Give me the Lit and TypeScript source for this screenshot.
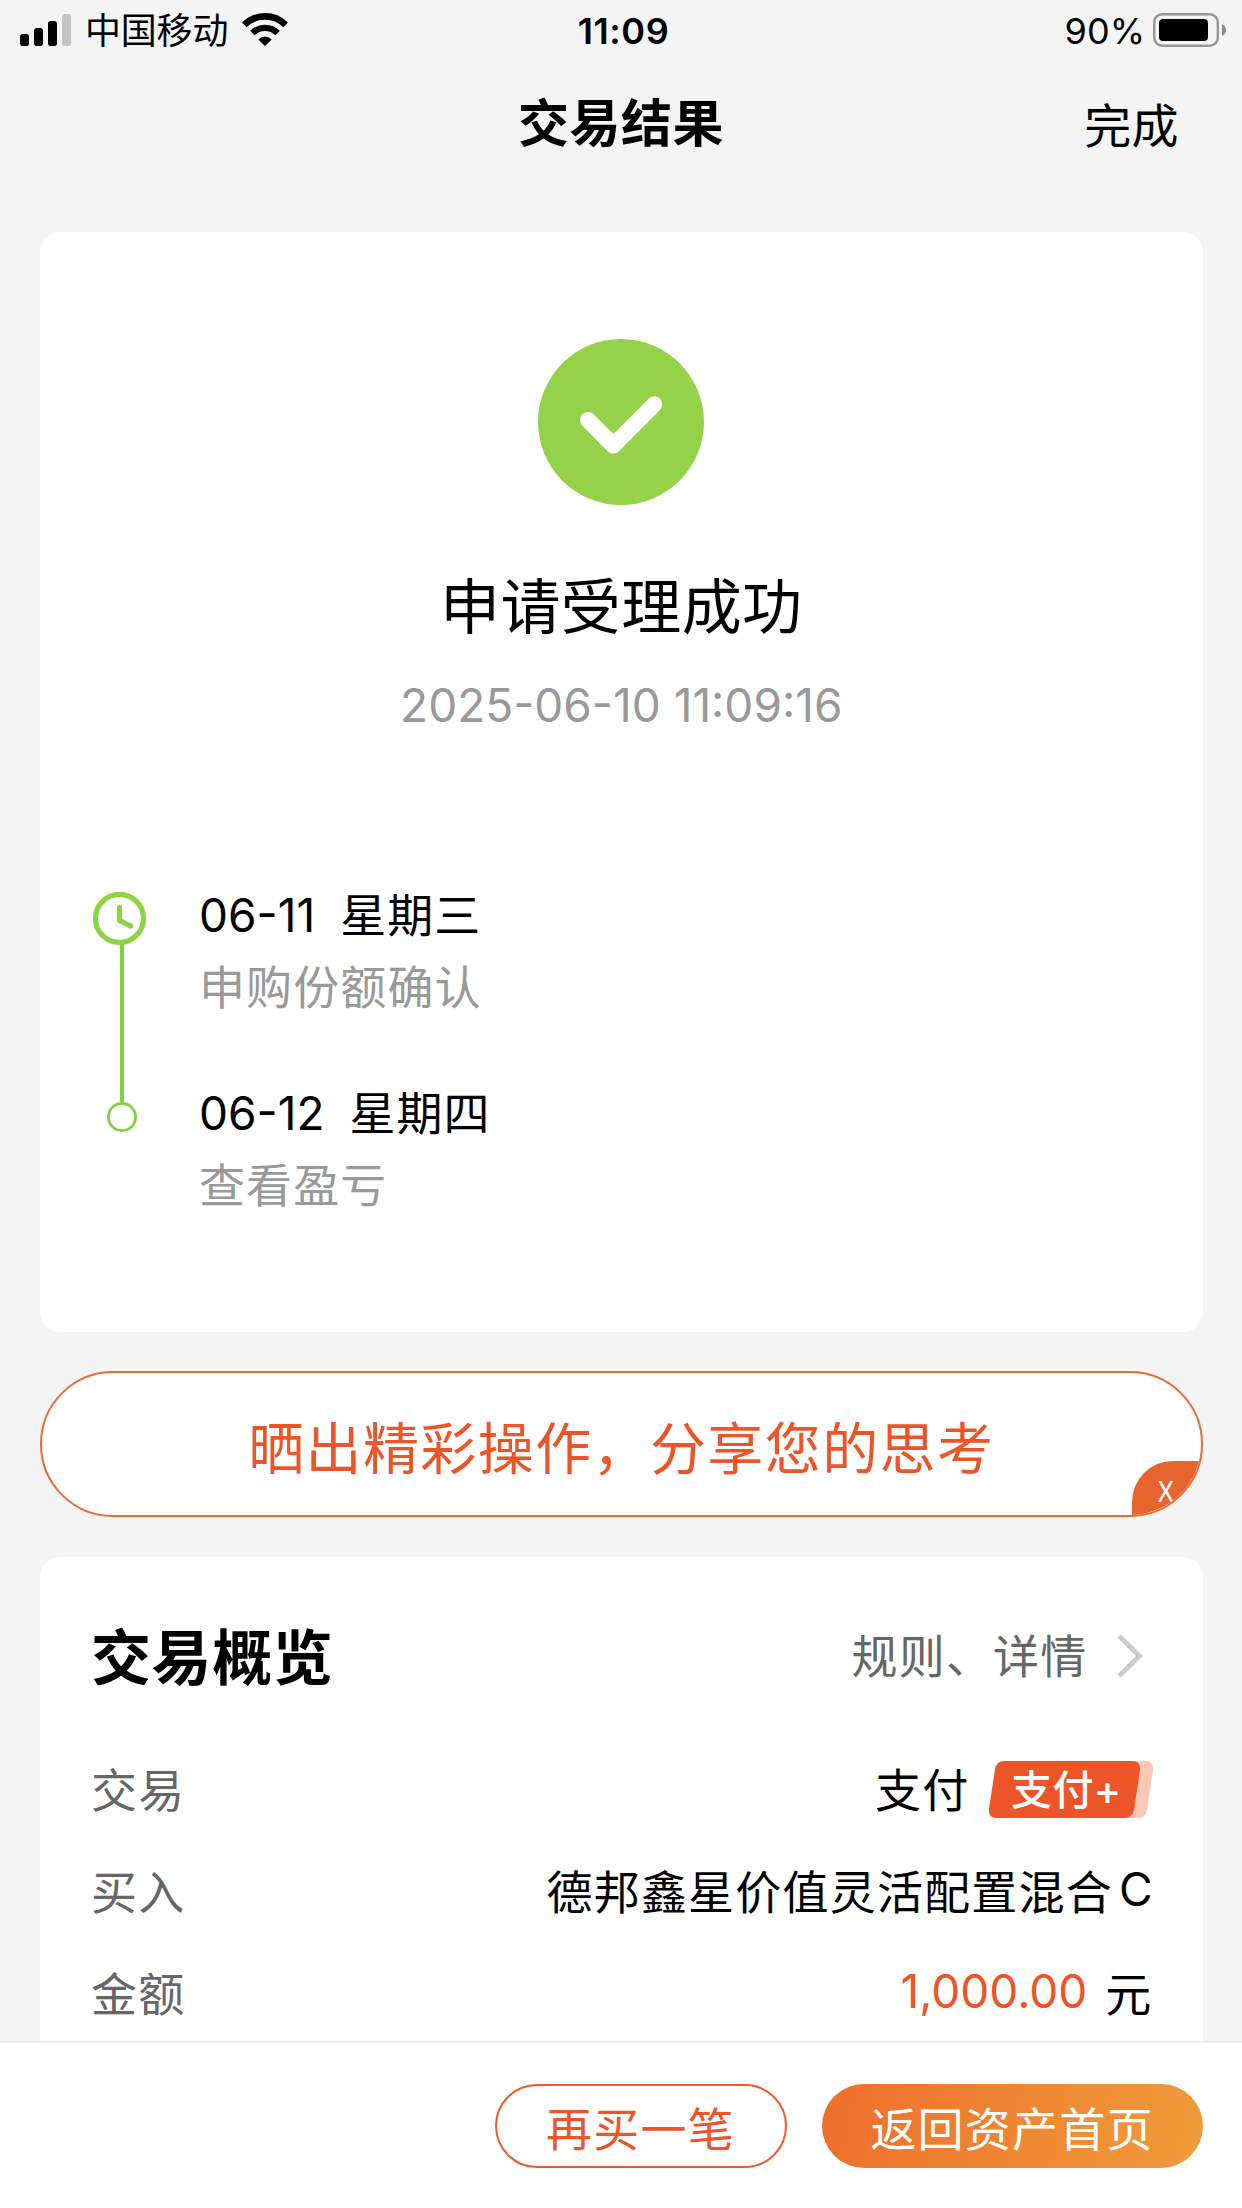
import { LitElement, html, css, svg } from "lit";
import { customElement, property } from "lit/decorators.js";

interface Step {
  date: string;
  weekday: string;
  note: string;
}

const STEPS: Step[] = [
  { date: "06-11", weekday: "星期三", note: "申购份额确认" },
  { date: "06-12", weekday: "星期四", note: "查看盈亏" },
];

const SIGNAL = [
  { x: 0, y: 20, on: true },
  { x: 14, y: 14, on: true },
  { x: 28, y: 7, on: true },
  { x: 42, y: 0, on: false },
];

@customElement("status-bar")
export class StatusBar extends LitElement {
  static styles = css`
    :host {
      display: grid;
      grid-template-columns: 1fr auto 1fr;
      align-items: center;
      height: 62px;
      padding: 0 15px 0 20px;
      font-size: 36px;
      line-height: 44px;
    }
    .left, .right { display: flex; align-items: center; }
    .right { justify-content: flex-end; }
    .signal { width: 51px; height: 32px; display: block; margin: 0 14px 2px 0; }
    .carrier { letter-spacing: -0.2px; }
    .wifi { width: 46px; height: 34px; display: block; margin: 0 0 3px 14px; }
    .time { font-weight: 600; letter-spacing: 0.6px; }
    .percent { letter-spacing: 0; margin-right: 8px; }
    .battery { width: 74px; height: 34px; display: block; margin-bottom: 2px; }
  `;

  render() {
    return html`
      <div class="left">
        <svg class="signal" viewBox="0 0 51 32">
          ${SIGNAL.map((b) => svg`<rect x=${b.x} y=${b.y} width="9" height=${32 - b.y} rx="2.8" fill=${b.on ? "#000" : "#c4c4c4"}/>`)}
        </svg>
        <span class="carrier">中国移动</span>
        <svg class="wifi" viewBox="0 0 46 34">
          <path d="M2.4 11.8 A29.5 29.5 0 0 1 43.6 11.8" fill="none" stroke="#000" stroke-width="6.6"/>
          <path d="M10.4 20 A18 18 0 0 1 35.6 20" fill="none" stroke="#000" stroke-width="6.4"/>
          <path d="M16.3 26.4 Q23 20.4 29.7 26.4 L23.6 32.6 Q23 33.1 22.4 32.6 Z" fill="#000"/>
        </svg>
      </div>
      <span class="time">11:09</span>
      <div class="right">
        <span class="percent">90%</span>
        <svg class="battery" viewBox="0 0 74 34">
          <rect x="1.2" y="1.2" width="63.6" height="31.6" rx="8" fill="none" stroke="#969696" stroke-width="2.4"/>
          <rect x="6" y="6" width="49" height="22" rx="4" fill="#000"/>
          <path d="M69 11 Q73 13 73 17 Q73 21 69 23 Z" fill="#8a8a8a"/>
        </svg>
      </div>
    `;
  }
}

@customElement("step-timeline")
export class StepTimeline extends LitElement {
  @property({ attribute: false }) steps: Step[] = [];

  static styles = css`
    :host { display: flex; gap: 51px; }
    .rail { width: 56px; height: 264px; flex: none; display: block; }
    .steps { display: flex; flex-direction: column; gap: 66px; }
    .head { display: flex; gap: 25px; font-size: 46px; line-height: 60px; color: #000; }
    .note { margin-top: 12px; font-size: 46px; line-height: 60px; letter-spacing: 1.1px; color: #999; }
    .weekday { letter-spacing: 1px; }
  `;

  render() {
    return html`
      <svg class="rail" viewBox="0 0 56 264">
        <path d="M30 58 V217" stroke="#83d043" stroke-width="4"/>
        <circle cx="27.5" cy="33.4" r="24" fill="#fff" stroke="#8cd444" stroke-width="5.2"/>
        <path d="M27.5 22.5 V35.4 L38.6 41" fill="none" stroke="#8cd444" stroke-width="5.2" stroke-linecap="round" stroke-linejoin="round"/>
        <circle cx="30" cy="232" r="13.6" fill="#fff" stroke="#83d043" stroke-width="2.8"/>
      </svg>
      <div class="steps">
        ${this.steps.map((s) => html`
          <div>
            <div class="head"><span>${s.date}</span><span class="weekday">${s.weekday}</span></div>
            <div class="note">${s.note}</div>
          </div>`)}
      </div>
    `;
  }
}

@customElement("app-root")
export class AppRoot extends LitElement {
  static styles = css`
    :host {
      display: flex;
      flex-direction: column;
      width: 1242px;
      height: 2208px;
      overflow: hidden;
      background: #f4f4f4;
      color: #000;
      font-family: Inter, "Noto Sans CJK SC", sans-serif;
    }
    .nav {
      flex: none;
      display: grid;
      grid-template-columns: 1fr auto 1fr;
      align-items: center;
      height: 123px;
      padding: 0 63px;
      margin-bottom: 47px;
    }
    .nav-title { grid-column: 2; font-size: 51px; font-weight: 600; letter-spacing: 0.5px; line-height: 64px; }
    .nav-done { justify-self: end; font-size: 47px; line-height: 60px; padding-top: 4px; letter-spacing: 0.4px; }
    .content { flex: 1; min-height: 0; overflow: hidden; padding: 0 39.5px 0 40px; }
    .card { background: #fff; border-radius: 20px; box-sizing: border-box; }

    .result { height: 1100px; padding: 107px 52px 0; display: flex; flex-direction: column; align-items: center; }
    .tick { width: 166px; height: 166px; display: block; }
    .result-title { margin-top: 62px; font-size: 60px; line-height: 80px; letter-spacing: 0.4px; }
    .result-time { margin-top: 28px; font-size: 46px; line-height: 60px; color: #999; }
    step-timeline { align-self: stretch; margin-top: 150px; }

    .share {
      position: relative;
      margin-top: 39px;
      height: 146px;
      box-sizing: border-box;
      border: 2px solid #ea6a35;
      border-radius: 73px;
      background: #fff;
      overflow: hidden;
      display: flex;
      align-items: center;
      justify-content: center;
      font-size: 56px;
      letter-spacing: 1.4px;
      color: #ec5528;
    }
    .share-close {
      position: absolute;
      right: -2px;
      bottom: -2px;
      width: 71px;
      height: 56px;
      box-sizing: border-box;
      border-top-left-radius: 41px;
      background: #e8642f;
      color: #fff;
      font-family: "Noto Sans CJK SC", sans-serif;
      font-size: 29px;
      line-height: 56px;
      letter-spacing: 0;
      padding-left: 26px;
    }

    .overview { margin-top: 40px; height: 640px; padding: 56px 50px 0 51px; }
    .overview-head { display: flex; justify-content: space-between; align-items: center; height: 80px; margin-bottom: 43px; }
    .overview-title { font-size: 60px; font-weight: 600; letter-spacing: 0.6px; }
    .link { display: flex; align-items: center; font-size: 46px; letter-spacing: 1.2px; color: #666; }
    .chevron { width: 28px; height: 46px; display: block; margin: 5px 9px 0 28px; }
    .row { display: flex; justify-content: space-between; align-items: center; height: 102px; font-size: 46px; letter-spacing: 1.2px; }
    .label { color: #666; }
    .value { display: flex; align-items: center; }
    .latin { letter-spacing: 0; margin-left: 6px; }
    .amount { color: #ec5528; letter-spacing: 0; margin-right: 18px; }
    .badge { width: 164px; height: 57px; display: block; margin: 4px 0 0 19px; }
    .badge-text { font-size: 41px; font-weight: 500; letter-spacing: 0.4px; fill: #fff; }

    .footer {
      flex: none;
      height: 167px;
      box-sizing: border-box;
      border-top: 2px solid #ececec;
      background: #fff;
      display: flex;
      justify-content: flex-end;
      gap: 35px;
      padding: 41px 39.5px 0;
    }
    .button {
      height: 84px;
      box-sizing: border-box;
      border-radius: 42px;
      display: flex;
      align-items: center;
      justify-content: center;
      font-size: 46px;
      letter-spacing: 1.2px;
    }
    .outline { width: 292px; border: 2px solid #ee5a2b; color: #ec5528; }
    .solid { width: 381px; color: #fff; background: linear-gradient(100deg, #ee6f2d, #f09c38); }
  `;

  render() {
    return html`
      <status-bar></status-bar>
      <div class="nav">
        <span class="nav-title">交易结果</span>
        <span class="nav-done">完成</span>
      </div>
      <div class="content">
        <section class="card result">
          <svg class="tick" viewBox="0 0 166 166">
            <circle cx="83" cy="83" r="83" fill="#94d24a"/>
            <path d="M50 81 L75.3 106.5 L116.3 65.3" fill="none" stroke="#fff" stroke-width="16" stroke-linecap="round" stroke-linejoin="round"/>
          </svg>
          <div class="result-title">申请受理成功</div>
          <div class="result-time">2025-06-10 11:09:16</div>
          <step-timeline .steps=${STEPS}></step-timeline>
        </section>
        <div class="share">
          <span>晒出精彩操作，分享您的思考</span>
          <span class="share-close">X</span>
        </div>
        <section class="card overview">
          <div class="overview-head">
            <span class="overview-title">交易概览</span>
            <span class="link">规则、详情
              <svg class="chevron" viewBox="0 0 28 46">
                <path d="M3 3 L23.5 23 L3 43" fill="none" stroke="#ccc" stroke-width="5"/>
              </svg>
            </span>
          </div>
          <div class="row">
            <span class="label">交易</span>
            <span class="value">支付
              <svg class="badge" viewBox="0 0 164 57">
                <path d="M30 0 H156 Q165 0 164 9 L158 49 Q156.500 57 148 57 H30 Z" fill="#f7c8b3"/>
                <path d="M15 0 H143 Q152 0 151 9 L145 49 Q143.500 57 135 57 H8 Q-1 57 0 48 L6 8 Q7.500 0 15 0 Z" fill="#ec5528"/>
                <text class="badge-text" x="22" y="44">支付+</text>
              </svg>
            </span>
          </div>
          <div class="row">
            <span class="label">买入</span>
            <span class="value">德邦鑫星价值灵活配置混合<span class="latin">C</span></span>
          </div>
          <div class="row">
            <span class="label">金额</span>
            <span class="value"><span class="amount">1,000.00</span>元</span>
          </div>
        </section>
      </div>
      <div class="footer">
        <div class="button outline">再买一笔</div>
        <div class="button solid">返回资产首页</div>
      </div>
    `;
  }
}
